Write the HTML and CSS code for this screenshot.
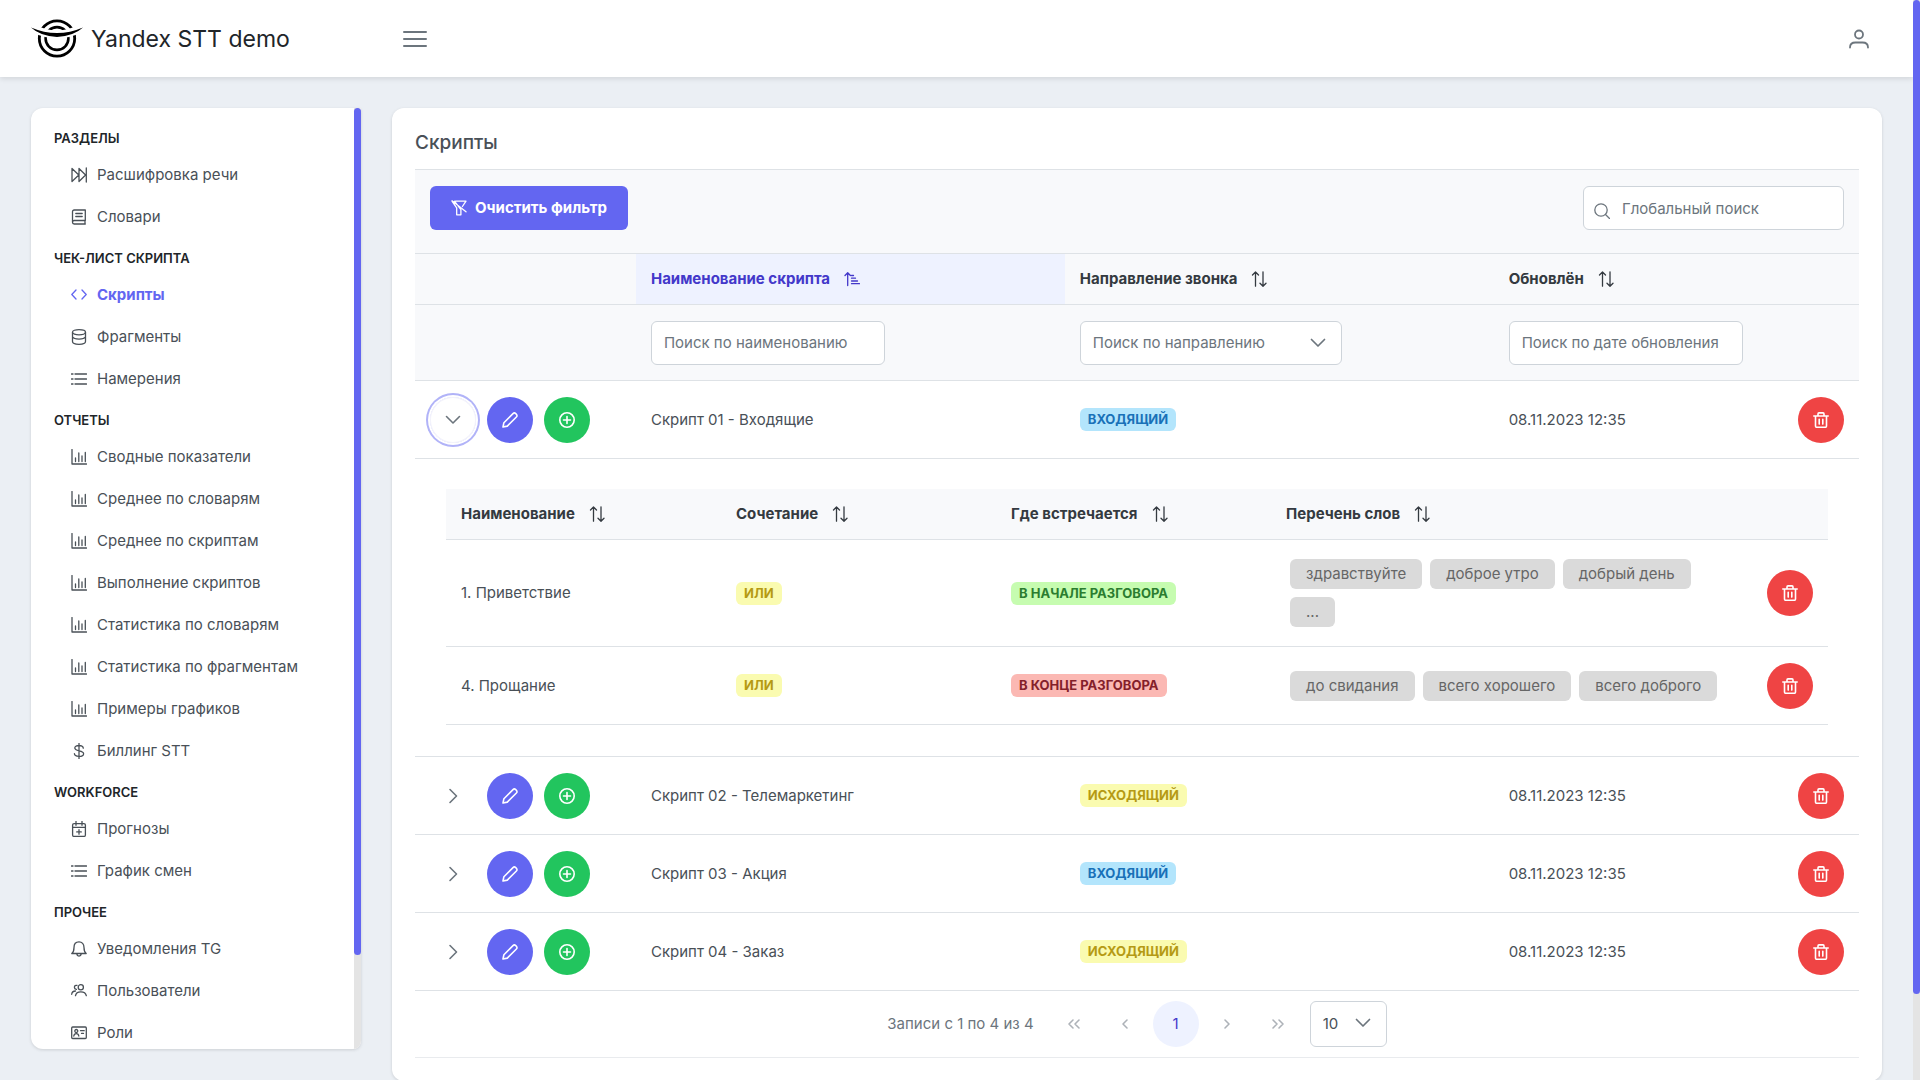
FILE: index.html
```html
<!DOCTYPE html>
<html lang="ru">
<head>
<meta charset="utf-8">
<meta name="viewport" content="width=device-width, initial-scale=1">
<title>Yandex STT demo</title>
<link rel="stylesheet" href="styles.css">
</head>
<body>
<svg class="sprite" aria-hidden="true">
  <symbol id="i-forward" viewBox="0 0 16 16"><path d="M1 1.5v13L7.8 8zM8 1.5v13L14.6 8zM15.3 1v14"/></symbol>
  <symbol id="i-book" viewBox="0 0 16 16"><path d="M14.3 1H3.2C2.2 1 1.500 1.700 1.500 2.700v10.600c0 1 .7 1.700 1.700 1.700h11.100M14.300 1v10.500H3.200c-1 0-1.700.8-1.700 1.700M14 11.500V15M4.800 4.500h6.400M4.800 7.500h6.400"/></symbol>
  <symbol id="i-code" viewBox="0 0 16 16"><path d="M5 3 .8 7.500 5 12M11 3l4.200 4.500L11 12"/></symbol>
  <symbol id="i-database" viewBox="0 0 16 16"><ellipse cx="8" cy="3.300" rx="6.500" ry="2.600"/><path d="M1.500 3.300v9.200C1.500 14 4.300 15.300 8 15.300s6.500-1.300 6.500-2.800V3.300M1.500 7.800c.7 1.400 3.300 2.300 6.500 2.300s5.800-.9 6.500-2.300"/></symbol>
  <symbol id="i-list" viewBox="0 0 16 16"><path d="M4 3h11.500M4 8h11.500M4 13h11.500M.5 3H2M.5 8H2M.5 13H2"/></symbol>
  <symbol id="i-chart" viewBox="0 0 16 16"><path d="M1 .5V15h14.500M4.500 9v3.500M7.800 4v8.500M11 7v5.500M14.300 3.500v9"/></symbol>
  <symbol id="i-dollar" viewBox="0 0 16 16"><path d="M8 .3v15.400M12.300 5.200C12.300 3.500 10.800 2.500 8 2.500S3.800 3.500 3.800 5.100C3.800 8.800 12.600 6.800 12.600 10.700c0 1.700-1.800 2.700-4.600 2.700s-4.600-1-4.600-2.800"/></symbol>
  <symbol id="i-calendar" viewBox="0 0 16 16"><rect x="1.600" y="2.600" width="12.800" height="12.800" rx="1.500"/><path d="M1.600 6.400h12.800M5 .3v4M11 .3v4M8 8.600v4.600M5.700 10.900h4.600"/></symbol>
  <symbol id="i-bell" viewBox="0 0 16 16"><path d="M.8 12.500h14.400c-2-1.500-2.200-3.400-2.200-6C13 3 11 .8 8 .8S3 3 3 6.500c0 2.600-.2 4.500-2.200 6zM5.800 13c.3 1.500 1 2.200 2.200 2.200s1.900-.7 2.200-2.200"/></symbol>
  <symbol id="i-users" viewBox="0 0 16 16"><circle cx="9.800" cy="4.300" r="2.600"/><path d="M4.500 12.700c.4-2.700 2.300-3.900 5.300-3.900s5 1.200 5.500 3.900M6 2.400C4.500 2 3.400 2.800 3.400 4.200c0 1.200.8 2 2 2.200M.7 11.300C.9 9 2.200 8 4.500 8"/></symbol>
  <symbol id="i-id" viewBox="0 0 16 16"><rect x=".7" y="2" width="14.600" height="11.500" rx="1"/><circle cx="5.300" cy="6" r="1.500"/><path d="M2.800 11c.2-1.700 1-2.400 2.500-2.400s2.300.7 2.500 2.400M9.500 5.700h3.700M10.500 8.400h2"/></symbol>
  <symbol id="i-filter-slash" viewBox="0 0 16 16"><path d="M4.500 1.200H15l-3.600 5.300M1 1.200l4.700 6.600v7h4.200V9.500M1 .8l14 11M3.500 1.200l6 8"/></symbol>
  <symbol id="i-sort" viewBox="0 0 16 16"><path d="M4.500 15.200V1M1.500 4 4.500 1l3 3M12 .8V15M9 12.200l3 3 3-3"/></symbol>
  <symbol id="i-sort-up" viewBox="0 0 16 16"><path d="M3.700 14.500V2M1 4.500 3.700 1.700l2.700 2.800M7.500 4.500h2M7.500 7.200h4M7.500 10h6M7.500 12.700h8"/></symbol>
  <symbol id="i-down" viewBox="0 0 16 16"><path d="m1.500 4.500 6.500 6.500 6.500-6.500"/></symbol>
  <symbol id="i-right" viewBox="0 0 16 16"><path d="M5 1.500 11.500 8 5 14.500"/></symbol>
  <symbol id="i-pencil" viewBox="0 0 16 16"><path d="M1 15l.9-4.300L11 1.600c.8-.8 1.900-.8 2.700 0l.7.700c.8.8.8 1.900 0 2.700L5.300 14.100z"/></symbol>
  <symbol id="i-plus" viewBox="0 0 16 16"><circle cx="8" cy="8" r="7.200"/><path d="M8 4.500v7M4.500 8h7"/></symbol>
  <symbol id="i-trash" viewBox="0 0 16 16"><path d="M.8 4h14.400M2.500 4v10c0 .8.5 1.300 1.300 1.300h8.400c.8 0 1.300-.5 1.300-1.300V4M5 4V1.900c0-.6.4-1 1-1h4c.6 0 1 .4 1 1V4M6.200 7.300v4.800M9.800 7.300v4.800"/></symbol>
  <symbol id="i-search" viewBox="0 0 16 16"><circle cx="7" cy="7" r="6.200"/><path d="m11.500 11.500 4 4"/></symbol>
  <symbol id="i-user" viewBox="0 0 20 20"><circle cx="10" cy="5.500" r="4"/><path d="M1 18.500c0-3.500 2.500-5 5.500-5h7c3 0 5.500 1.500 5.500 5"/></symbol>
  <symbol id="i-prev" viewBox="0 0 16 16"><path d="M10 4 6 8l4 4"/></symbol>
  <symbol id="i-next" viewBox="0 0 16 16"><path d="m6 4 4 4-4 4"/></symbol>
  <symbol id="i-first" viewBox="0 0 16 16"><path d="M7 4 3 8l4 4M13 4 9 8l4 4"/></symbol>
  <symbol id="i-last" viewBox="0 0 16 16"><path d="m3 4 4 4-4 4M9 4l4 4-4 4"/></symbol>
</svg>

<header class="topbar">
  <a class="brand" href="#">
    <svg class="logo" viewBox="0 0 52 40" aria-hidden="true">
      <circle cx="26" cy="19.500" r="17.700" fill="none" stroke="#000" stroke-width="2.800"/>
      <circle cx="26" cy="19.500" r="11.400" fill="none" stroke="#000" stroke-width="2.600"/>
      <path d="M0 8Q26 23 52 8" fill="none" stroke="#fff" stroke-width="8"/>
      <path d="M0 8.500Q26 19.500 52 8.500Q43 17 26 17.900Q9 17 0 8.500z" fill="#000"/>
    </svg>
    <span>Yandex STT demo</span>
  </a>
  <button class="plain menu-toggle" aria-label="Меню"><svg viewBox="0 0 24 18"><path d="M1 2h22M1 9h22M1 16h22"/></svg></button>
  <button class="plain profile" aria-label="Профиль"><svg><use href="#i-user"/></svg></button>
</header>

<div class="layout">
  <aside class="sidebar">
    <nav class="menu">
      <h2>Разделы</h2>
      <a href="#"><svg class="icon"><use href="#i-forward"/></svg>Расшифровка речи</a>
      <a href="#"><svg class="icon"><use href="#i-book"/></svg>Словари</a>
      <h2>Чек-лист скрипта</h2>
      <a href="#" class="active" aria-current="page"><svg class="icon"><use href="#i-code"/></svg>Скрипты</a>
      <a href="#"><svg class="icon"><use href="#i-database"/></svg>Фрагменты</a>
      <a href="#"><svg class="icon"><use href="#i-list"/></svg>Намерения</a>
      <h2>Отчеты</h2>
      <a href="#"><svg class="icon"><use href="#i-chart"/></svg>Сводные показатели</a>
      <a href="#"><svg class="icon"><use href="#i-chart"/></svg>Среднее по словарям</a>
      <a href="#"><svg class="icon"><use href="#i-chart"/></svg>Среднее по скриптам</a>
      <a href="#"><svg class="icon"><use href="#i-chart"/></svg>Выполнение скриптов</a>
      <a href="#"><svg class="icon"><use href="#i-chart"/></svg>Статистика по словарям</a>
      <a href="#"><svg class="icon"><use href="#i-chart"/></svg>Статистика по фрагментам</a>
      <a href="#"><svg class="icon"><use href="#i-chart"/></svg>Примеры графиков</a>
      <a href="#"><svg class="icon"><use href="#i-dollar"/></svg>Биллинг STT</a>
      <h2>Workforce</h2>
      <a href="#"><svg class="icon"><use href="#i-calendar"/></svg>Прогнозы</a>
      <a href="#"><svg class="icon"><use href="#i-list"/></svg>График смен</a>
      <h2>Прочее</h2>
      <a href="#"><svg class="icon"><use href="#i-bell"/></svg>Уведомления TG</a>
      <a href="#"><svg class="icon"><use href="#i-users"/></svg>Пользователи</a>
      <a href="#"><svg class="icon"><use href="#i-id"/></svg>Роли</a>
    </nav>
    <div class="scroll-track"><div class="scroll-thumb menu-thumb"></div></div>
  </aside>

  <main class="card">
    <h1>Скрипты</h1>
    <div class="toolbar">
      <button class="clear"><svg class="icon"><use href="#i-filter-slash"/></svg>Очистить фильтр</button>
      <label class="search"><svg class="icon"><use href="#i-search"/></svg><input class="field" type="text" placeholder="Глобальный поиск" aria-label="Глобальный поиск"></label>
    </div>
    <table class="grid scripts">
      <colgroup><col class="c-actions"><col class="c-name"><col class="c-name"><col><col class="c-delete"></colgroup>
      <thead>
        <tr class="heads">
          <th></th>
          <th class="sorted" aria-sort="ascending"><span class="head">Наименование скрипта<svg class="icon"><use href="#i-sort-up"/></svg></span></th>
          <th><span class="head">Направление звонка<svg class="icon"><use href="#i-sort"/></svg></span></th>
          <th><span class="head">Обновлён<svg class="icon"><use href="#i-sort"/></svg></span></th>
          <th></th>
        </tr>
        <tr class="filters">
          <th></th>
          <th><input class="field" type="text" placeholder="Поиск по наименованию" aria-label="Поиск по наименованию"></th>
          <th><span class="select wide"><select class="field" aria-label="Поиск по направлению"><option>Поиск по направлению</option><option>Входящий</option><option>Исходящий</option></select><svg class="icon"><use href="#i-down"/></svg></span></th>
          <th><input class="field" type="text" placeholder="Поиск по дате обновления" aria-label="Поиск по дате обновления"></th>
          <th></th>
        </tr>
      </thead>
      <tbody>
        <tr class="row">
          <td><div class="actions"><button class="round expander focused" aria-label="Свернуть"><svg class="icon"><use href="#i-down"/></svg></button><button class="round edit" aria-label="Изменить"><svg class="icon"><use href="#i-pencil"/></svg></button><button class="round add" aria-label="Добавить"><svg class="icon"><use href="#i-plus"/></svg></button></div></td>
          <td>Скрипт 01 - Входящие</td>
          <td><span class="badge blue">Входящий</span></td>
          <td>08.11.2023 12:35</td>
          <td><button class="round delete" aria-label="Удалить"><svg class="icon"><use href="#i-trash"/></svg></button></td>
        </tr>
        <tr class="expansion">
          <td colspan="5">
            <table class="grid phrases">
              <colgroup><col class="p-text"><col class="p-text"><col class="p-text"><col class="p-words"><col></colgroup>
              <thead>
                <tr class="heads">
                  <th><span class="head">Наименование<svg class="icon"><use href="#i-sort"/></svg></span></th>
                  <th><span class="head">Сочетание<svg class="icon"><use href="#i-sort"/></svg></span></th>
                  <th><span class="head">Где встречается<svg class="icon"><use href="#i-sort"/></svg></span></th>
                  <th><span class="head">Перечень слов<svg class="icon"><use href="#i-sort"/></svg></span></th>
                  <th></th>
                </tr>
              </thead>
              <tbody>
                <tr class="row">
                  <td>1. Приветствие</td>
                  <td><span class="badge yellow">или</span></td>
                  <td><span class="badge green">в начале разговора</span></td>
                  <td><div class="chips"><span>здравствуйте</span><span>доброе утро</span><span>добрый день</span><span>...</span></div></td>
                  <td><button class="round delete" aria-label="Удалить"><svg class="icon"><use href="#i-trash"/></svg></button></td>
                </tr>
                <tr class="row">
                  <td>4. Прощание</td>
                  <td><span class="badge yellow">или</span></td>
                  <td><span class="badge red">в конце разговора</span></td>
                  <td><div class="chips"><span>до свидания</span><span>всего хорошего</span><span>всего доброго</span></div></td>
                  <td><button class="round delete" aria-label="Удалить"><svg class="icon"><use href="#i-trash"/></svg></button></td>
                </tr>
              </tbody>
            </table>
          </td>
        </tr>
        <tr class="row">
          <td><div class="actions"><button class="round expander" aria-label="Развернуть"><svg class="icon"><use href="#i-right"/></svg></button><button class="round edit" aria-label="Изменить"><svg class="icon"><use href="#i-pencil"/></svg></button><button class="round add" aria-label="Добавить"><svg class="icon"><use href="#i-plus"/></svg></button></div></td>
          <td>Скрипт 02 - Телемаркетинг</td>
          <td><span class="badge yellow">Исходящий</span></td>
          <td>08.11.2023 12:35</td>
          <td><button class="round delete" aria-label="Удалить"><svg class="icon"><use href="#i-trash"/></svg></button></td>
        </tr>
        <tr class="row">
          <td><div class="actions"><button class="round expander" aria-label="Развернуть"><svg class="icon"><use href="#i-right"/></svg></button><button class="round edit" aria-label="Изменить"><svg class="icon"><use href="#i-pencil"/></svg></button><button class="round add" aria-label="Добавить"><svg class="icon"><use href="#i-plus"/></svg></button></div></td>
          <td>Скрипт 03 - Акция</td>
          <td><span class="badge blue">Входящий</span></td>
          <td>08.11.2023 12:35</td>
          <td><button class="round delete" aria-label="Удалить"><svg class="icon"><use href="#i-trash"/></svg></button></td>
        </tr>
        <tr class="row">
          <td><div class="actions"><button class="round expander" aria-label="Развернуть"><svg class="icon"><use href="#i-right"/></svg></button><button class="round edit" aria-label="Изменить"><svg class="icon"><use href="#i-pencil"/></svg></button><button class="round add" aria-label="Добавить"><svg class="icon"><use href="#i-plus"/></svg></button></div></td>
          <td>Скрипт 04 - Заказ</td>
          <td><span class="badge yellow">Исходящий</span></td>
          <td>08.11.2023 12:35</td>
          <td><button class="round delete" aria-label="Удалить"><svg class="icon"><use href="#i-trash"/></svg></button></td>
        </tr>
      </tbody>
    </table>
    <div class="paginator">
      <span class="summary">Записи с 1 по 4 из 4</span>
      <button class="round page" disabled aria-label="Первая"><svg class="icon"><use href="#i-first"/></svg></button>
      <button class="round page" disabled aria-label="Предыдущая"><svg class="icon"><use href="#i-prev"/></svg></button>
      <button class="round page current">1</button>
      <button class="round page" disabled aria-label="Следующая"><svg class="icon"><use href="#i-next"/></svg></button>
      <button class="round page" disabled aria-label="Последняя"><svg class="icon"><use href="#i-last"/></svg></button>
      <span class="select size"><select class="field" aria-label="Строк на странице"><option>10</option><option>20</option></select><svg class="icon"><use href="#i-down"/></svg></span>
    </div>
  </main>
</div>
<div class="scroll-track page-scroll"><div class="scroll-thumb page-thumb"></div></div>
</body>
</html>
```

FILE: styles.css
```css
* { box-sizing: border-box; }

:root {
  --primary: #6366f1;
  --text: #495057;
  --muted: #6c757d;
  --line: #dee2e6;
  --head: #f8f9fb;
  --shadow: 0 1px 3px rgba(0, 0, 0, .08), 0 1px 4px rgba(0, 0, 0, .06);
}

html { overflow: hidden; }

body {
  margin: 0;
  padding-right: 7px;
  min-height: 100vh;
  background: #ebeff4;
  color: var(--text);
  font: 15px/20px Inter, "Noto Sans", sans-serif;
}

button, input, select { font: inherit; color: inherit; }
button { cursor: pointer; }
a { color: inherit; text-decoration: none; }
.sprite { display: none; }

.icon {
  flex: none;
  width: 16px;
  height: 16px;
}

svg {
  fill: none;
  stroke: currentColor;
  stroke-width: 1.3;
  stroke-linecap: round;
  stroke-linejoin: round;
}

/* Top bar */
.topbar {
  display: flex;
  align-items: center;
  height: 77px;
  padding: 0 44px 0 31px;
  background: #fff;
  box-shadow: 0 2px 5px rgba(0, 0, 0, .1);
}
.brand {
  display: flex;
  align-items: center;
  gap: 8px;
  width: 372px;
  color: #212529;
  font-size: 23px;
  line-height: 28px;
}
.logo { width: 52px; height: 40px; stroke: none; }
.plain {
  display: flex;
  padding: 0;
  border: 0;
  background: none;
  color: var(--muted);
}
.menu-toggle svg { width: 24px; height: 18px; stroke-width: 2; }
.profile { margin-left: auto; }
.profile svg { width: 20px; height: 20px; stroke-width: 1.8; }

.layout {
  display: flex;
  align-items: flex-start;
  gap: 31px;
  padding: 31px 31px 0;
}

/* Side menu */
.sidebar {
  flex: none;
  display: flex;
  width: 330px;
  height: calc(100vh - 139px);
  overflow: hidden;
  border-radius: 12px 2px 8px 12px;
  background: #fff;
  box-shadow: var(--shadow);
}
.menu {
  flex: 1;
  padding: 10px 23px;
}
.menu h2 {
  margin: 0;
  padding: 12px 0 8px;
  color: #212529;
  font-size: 13px;
  line-height: 16px;
  font-weight: 600;
  text-transform: uppercase;
}
.menu a {
  display: flex;
  align-items: center;
  gap: 10px;
  height: 42px;
  padding-left: 17px;
}
.menu .active { color: var(--primary); font-weight: 700; }

.scroll-track { width: 7px; background: #e4e4e4; }
.scroll-thumb { border-radius: 4px; background: var(--primary); }
.menu-thumb { height: 90%; }
.page-scroll { position: fixed; top: 0; right: 0; bottom: 0; }
.page-thumb { height: 92%; }

/* Card */
.card {
  flex: 1;
  min-width: 0;
  padding: 23px;
  border-radius: 12px;
  background: #fff;
  box-shadow: var(--shadow);
}
h1 {
  margin: 0 0 15px;
  font-size: 19px;
  line-height: 23px;
  font-weight: 500;
}
.toolbar {
  display: flex;
  justify-content: space-between;
  padding: 16px 15px 23px;
  border: solid var(--line);
  border-width: 1px 0;
  background: var(--head);
}
.clear {
  display: flex;
  align-items: center;
  gap: 8px;
  height: 44px;
  padding: 0 21px;
  border: 0;
  border-radius: 6px;
  background: var(--primary);
  color: #fff;
  font-weight: 700;
}
.field {
  display: block;
  width: 234px;
  height: 44px;
  padding: 0 12px;
  border: 1px solid #ced4da;
  border-radius: 6px;
  background: #fff;
  color: var(--muted);
  font-weight: 400;
}
.field::placeholder { color: var(--muted); opacity: 1; }
.search { position: relative; color: var(--muted); }
.search .field { width: 261px; padding-left: 38px; }
.search .icon { position: absolute; left: 11px; top: 17px; }
.select { position: relative; display: block; color: var(--muted); }
.select .field { width: 100%; appearance: none; }
.select .icon { position: absolute; right: 16px; top: 14px; stroke-width: 1.7; }
.wide { width: 262px; }
.size { width: 77px; margin-left: 4px; }
.size .field { height: 46px; color: var(--text); }

/* Tables */
.grid {
  width: 100%;
  table-layout: fixed;
  border-collapse: separate;
  border-spacing: 0;
}
.grid th, .grid td {
  padding: 0 15px;
  border-bottom: 1px solid var(--line);
  text-align: left;
  vertical-align: middle;
}
.grid th { background: var(--head); }
.grid .sorted { background: #eef2ff; color: #4338ca; }
.c-actions { width: 15.3%; }
.c-name { width: 29.7%; }
.c-delete { width: 76px; }
.p-text { width: 19.9%; }
.p-words { width: 34.5%; }
.heads { height: 51px; color: #343a40; }
.filters { height: 76px; }
.row { height: 78px; }
.head { display: flex; align-items: center; gap: 14px; font-weight: 700; }
.grid .expansion > td { padding: 30px 31px 31px; }

.actions { display: flex; gap: 11px; }
.round {
  display: flex;
  align-items: center;
  justify-content: center;
  flex: none;
  width: 46px;
  height: 46px;
  padding: 0;
  border: 0;
  border-radius: 50%;
  background: none;
  color: #fff;
}
.round .icon { stroke-width: 1.6; }
.expander { color: var(--muted); }
.focused { box-shadow: 0 0 0 2px #fff, 0 0 0 4px #b1b3f8, inset 0 0 0 1px #f3f3fb; }
.edit { background: var(--primary); }
.add { background: #22c55e; }
.delete { margin-left: auto; background: #ef4444; }

.badge {
  display: inline-block;
  padding: 0 8px;
  border-radius: 6px;
  font-size: 13px;
  line-height: 23px;
  font-weight: 700;
  text-transform: uppercase;
  vertical-align: middle;
}
.blue { background: #b3e5fc; color: #1971b8; }
.yellow { background: #fafbb0; color: #b59a14; }
.green { background: #c6fcb0; color: #2b7d2f; }
.red { background: #fbb8b3; color: #84202a; }

.chips {
  display: flex;
  flex-wrap: wrap;
  gap: 8px;
  padding: 19px 4px;
}
.chips span {
  padding: 5px 16px;
  border-radius: 6px;
  background: #dadada;
  color: #666;
}

/* Paginator */
.paginator {
  display: flex;
  align-items: center;
  justify-content: center;
  gap: 5px;
  height: 67px;
  border-bottom: 1px solid #e9ebee;
  color: var(--muted);
}
.summary { margin-right: 12px; }
.page { color: #adb2b8; }
.current { background: #eef2ff; color: #4338ca; }
```
